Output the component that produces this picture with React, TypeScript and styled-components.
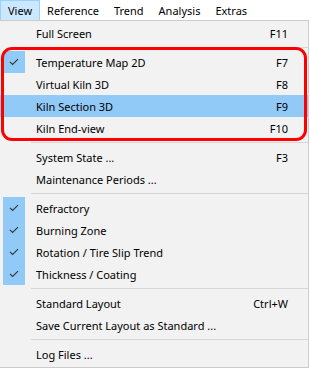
import React from "react";
import styled, { createGlobalStyle } from "styled-components";

const Global = createGlobalStyle`
  html, body { margin: 0; padding: 0; background: #ffffff; }
  body { font-family: "Noto Sans", "Open Sans", sans-serif; font-size: 11px; color: #000; }
`;

const Page = styled.div`
  width: 310px;
  height: 368px;
  background: #ffffff;
  display: flex;
  flex-direction: column;
`;

const MenuBar = styled.div`
  height: 20px;
  display: flex;
  align-items: stretch;
  background: #ffffff;
`;

const BarItem = styled.div<{ $active?: boolean }>`
  box-sizing: border-box;
  padding: 0 7px;
  display: flex;
  align-items: center;
  height: 20px;
  border: 1px solid ${(p) => (p.$active ? "#99d1ff" : "transparent")};
  border-bottom: none;
  background: ${(p) => (p.$active ? "#cce8ff" : "transparent")};
  margin-right: -1px;
`;

const Menu = styled.div`
  box-sizing: border-box;
  width: 309px;
  flex: 1;
  background: #f2f2f2;
  border-top: 1px solid #cccccc;
  border-right: 1px solid #cccccc;
  border-bottom: 1px solid #cccccc;
  padding: 1px 0 2px 0;
  display: flex;
  flex-direction: column;
`;

const Row = styled.div<{ $hover?: boolean }>`
  height: 22px;
  display: flex;
  align-items: center;
  background: ${(p) => (p.$hover ? "#91c9f7" : "transparent")};
  position: relative;
`;

const CheckCell = styled.div<{ $checked?: boolean }>`
  width: 22px;
  height: 22px;
  margin-left: 3px;
  margin-right: 11px;
  display: flex;
  align-items: center;
  justify-content: center;
  background: ${(p) => (p.$checked ? "#91c9f7" : "transparent")};
`;

const Label = styled.span`
  flex: 1;
  white-space: nowrap;
`;

const Shortcut = styled.span`
  margin-right: 20px;
  white-space: nowrap;
`;

const Separator = styled.div`
  height: 7px;
  display: flex;
  align-items: center;
  padding-left: 31px;
  box-sizing: border-box;
  &::after {
    content: "";
    display: block;
    height: 1px;
    flex: 1;
    background: #d7d7d7;
  }
`;

const Group = styled.div`
  position: relative;
  display: flex;
  flex-direction: column;
  &::after {
    content: "";
    position: absolute;
    left: 1px;
    right: 1px;
    top: -4px;
    bottom: -2px;
    border: 3px solid #ff0000;
    border-radius: 11px;
    pointer-events: none;
  }
`;

const Check = () => (
  <svg width="10" height="8" viewBox="0 0 10 8">
    <polyline points="1,3.8 3.6,6.4 9,1.2" fill="none" stroke="#333333" strokeWidth="1.1" />
  </svg>
);

type ItemProps = { label: string; shortcut?: string; checked?: boolean; hover?: boolean };

const Item = ({ label, shortcut, checked, hover }: ItemProps) => (
  <Row $hover={hover}>
    <CheckCell $checked={checked}>{checked && <Check />}</CheckCell>
    <Label>{label}</Label>
    {shortcut && <Shortcut>{shortcut}</Shortcut>}
  </Row>
);

export default function App() {
  return (
    <Page>
      <Global />
      <MenuBar>
        <BarItem $active>View</BarItem>
        <BarItem>Reference</BarItem>
        <BarItem>Trend</BarItem>
        <BarItem>Analysis</BarItem>
        <BarItem>Extras</BarItem>
      </MenuBar>
      <Menu>
        <Item label="Full Screen" shortcut="F11" />
        <Separator />
        <Group>
          <Item label="Temperature Map 2D" shortcut="F7" checked />
          <Item label="Virtual Kiln 3D" shortcut="F8" />
          <Item label="Kiln Section 3D" shortcut="F9" hover />
          <Item label="Kiln End-view" shortcut="F10" />
        </Group>
        <Separator />
        <Item label="System State ..." shortcut="F3" />
        <Item label="Maintenance Periods ..." />
        <Separator />
        <Item label="Refractory" checked />
        <Item label="Burning Zone" checked />
        <Item label="Rotation / Tire Slip Trend" checked />
        <Item label="Thickness / Coating" checked />
        <Separator />
        <Item label="Standard Layout" shortcut="Ctrl+W" />
        <Item label="Save Current Layout as Standard ..." />
        <Separator />
        <Item label="Log Files ..." />
      </Menu>
    </Page>
  );
}
